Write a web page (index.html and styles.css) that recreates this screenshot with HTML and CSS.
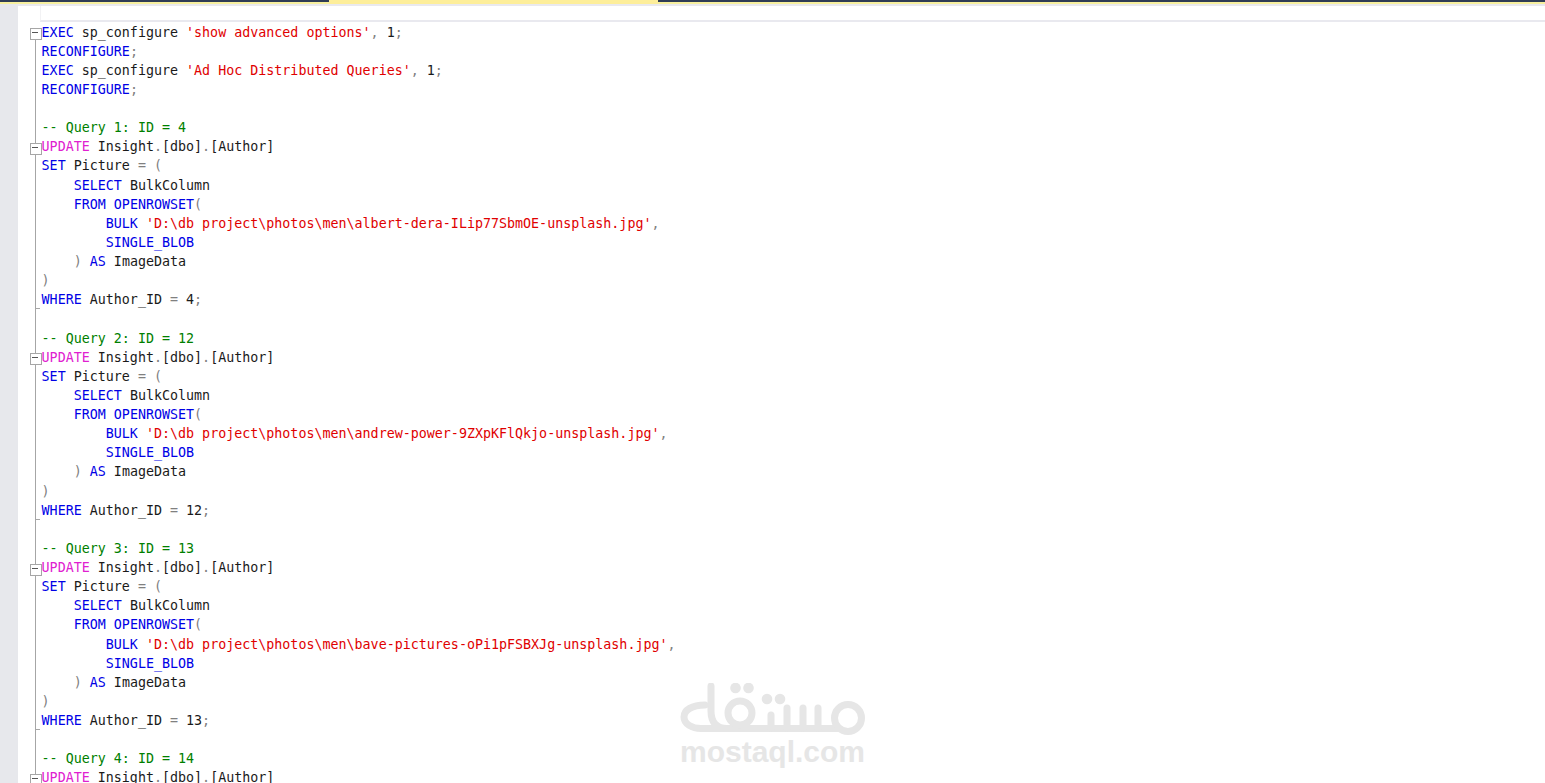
FILE: index.html
```html
<!DOCTYPE html>
<html lang="en">
<head>
<meta charset="utf-8">
<title>SQL editor</title>
<link rel="stylesheet" href="styles.css">
</head>
<body>
<div class="topbar">
  <div class="seg-dark"></div>
  <div class="tab-active"></div>
  <div class="tab-rest"></div>
</div>
<div class="workspace">
  <div class="margin"></div>
  <div class="editor">
    <div class="ruler"></div>
    <div class="code">
<div class="row"><span class="fold minus first"></span><code><b>EXEC</b> sp_configure <i>'show advanced options'</i><s>,</s> 1<s>;</s></code></div>
<div class="row"><span class="fold"></span><code><b>RECONFIGURE</b><s>;</s></code></div>
<div class="row"><span class="fold"></span><code><b>EXEC</b> sp_configure <i>'Ad Hoc Distributed Queries'</i><s>,</s> 1<s>;</s></code></div>
<div class="row"><span class="fold"></span><code><b>RECONFIGURE</b><s>;</s></code></div>
<div class="row"><span class="fold"></span><code> </code></div>
<div class="row"><span class="fold"></span><code><u>-- Query 1: ID = 4</u></code></div>
<div class="row"><span class="fold minus"></span><code><em>UPDATE</em> Insight<s>.</s>[dbo]<s>.</s>[Author]</code></div>
<div class="row"><span class="fold"></span><code><b>SET</b> Picture <s>=</s> <s>(</s></code></div>
<div class="row"><span class="fold"></span><code>    <b>SELECT</b> BulkColumn</code></div>
<div class="row"><span class="fold"></span><code>    <b>FROM</b> <b>OPENROWSET</b><s>(</s></code></div>
<div class="row"><span class="fold"></span><code>        <b>BULK</b> <i>'D:\db project\photos\men\albert-dera-ILip77SbmOE-unsplash.jpg'</i><s>,</s></code></div>
<div class="row"><span class="fold"></span><code>        <b>SINGLE_BLOB</b></code></div>
<div class="row"><span class="fold"></span><code>    <s>)</s> <b>AS</b> ImageData</code></div>
<div class="row"><span class="fold"></span><code><s>)</s></code></div>
<div class="row"><span class="fold end"></span><code><b>WHERE</b> Author_ID <s>=</s> 4<s>;</s></code></div>
<div class="row"><span class="fold"></span><code> </code></div>
<div class="row"><span class="fold"></span><code><u>-- Query 2: ID = 12</u></code></div>
<div class="row"><span class="fold minus"></span><code><em>UPDATE</em> Insight<s>.</s>[dbo]<s>.</s>[Author]</code></div>
<div class="row"><span class="fold"></span><code><b>SET</b> Picture <s>=</s> <s>(</s></code></div>
<div class="row"><span class="fold"></span><code>    <b>SELECT</b> BulkColumn</code></div>
<div class="row"><span class="fold"></span><code>    <b>FROM</b> <b>OPENROWSET</b><s>(</s></code></div>
<div class="row"><span class="fold"></span><code>        <b>BULK</b> <i>'D:\db project\photos\men\andrew-power-9ZXpKFlQkjo-unsplash.jpg'</i><s>,</s></code></div>
<div class="row"><span class="fold"></span><code>        <b>SINGLE_BLOB</b></code></div>
<div class="row"><span class="fold"></span><code>    <s>)</s> <b>AS</b> ImageData</code></div>
<div class="row"><span class="fold"></span><code><s>)</s></code></div>
<div class="row"><span class="fold end"></span><code><b>WHERE</b> Author_ID <s>=</s> 12<s>;</s></code></div>
<div class="row"><span class="fold"></span><code> </code></div>
<div class="row"><span class="fold"></span><code><u>-- Query 3: ID = 13</u></code></div>
<div class="row"><span class="fold minus"></span><code><em>UPDATE</em> Insight<s>.</s>[dbo]<s>.</s>[Author]</code></div>
<div class="row"><span class="fold"></span><code><b>SET</b> Picture <s>=</s> <s>(</s></code></div>
<div class="row"><span class="fold"></span><code>    <b>SELECT</b> BulkColumn</code></div>
<div class="row"><span class="fold"></span><code>    <b>FROM</b> <b>OPENROWSET</b><s>(</s></code></div>
<div class="row"><span class="fold"></span><code>        <b>BULK</b> <i>'D:\db project\photos\men\bave-pictures-oPi1pFSBXJg-unsplash.jpg'</i><s>,</s></code></div>
<div class="row"><span class="fold"></span><code>        <b>SINGLE_BLOB</b></code></div>
<div class="row"><span class="fold"></span><code>    <s>)</s> <b>AS</b> ImageData</code></div>
<div class="row"><span class="fold"></span><code><s>)</s></code></div>
<div class="row"><span class="fold end"></span><code><b>WHERE</b> Author_ID <s>=</s> 13<s>;</s></code></div>
<div class="row"><span class="fold"></span><code> </code></div>
<div class="row"><span class="fold"></span><code><u>-- Query 4: ID = 14</u></code></div>
<div class="row"><span class="fold minus"></span><code><em>UPDATE</em> Insight<s>.</s>[dbo]<s>.</s>[Author]</code></div>
    </div>
  </div>
</div>
<div class="watermark">
  <svg class="wm-logo" viewBox="0 0 186 56" width="186" height="56" aria-hidden="true">
    <g fill="none" stroke="#e6e6e6" stroke-width="7" stroke-linecap="round" stroke-linejoin="round">
      <path d="M32 3V28C32 40 38 45.5 48 45.5"/>
      <path d="M26 22C13 22 5 27 5 34C5 41 13 45.5 22 45.5H160"/>
      <circle cx="61" cy="30" r="12"/>
      <path d="M92 32V45M108 25V45M124 25V45M139 25V45"/>
      <circle cx="169" cy="35" r="13.5"/>
    </g>
    <g fill="#e6e6e6">
      <circle cx="56.5" cy="5" r="5.3"/><circle cx="69.5" cy="5" r="5.3"/>
      <circle cx="88" cy="16" r="5.3"/><circle cx="101" cy="16" r="5.3"/>
    </g>
  </svg>
  <div class="wm-text">mostaql.com</div>
</div>
</body>
</html>
```
FILE: styles.css
```css
* { box-sizing: border-box; }
html, body { margin: 0; height: 100%; }
body { position: relative; width: 1545px; height: 783px; overflow: hidden; background: #fff; }
.topbar { display: flex; height: 4px; }
.seg-dark { width: 329px; background: linear-gradient(#2f3c55 0 2px, #f7f09e 2px); }
.tab-active { width: 329px; background: #fdee9a; }
.tab-rest { flex: 1; background: linear-gradient(#2f3c55 0 2px, #f7f09e 2px); }
.workspace { display: flex; height: 779px; }
.margin { width: 18px; background: #e7e8ec; }
.editor { flex: 1; min-width: 0; border-top: 2px solid #e9e9ee; }
.ruler { height: 16px; margin-left: 22px; border-bottom: 2px solid #e9e9ef; border-left: 1px solid #f2f2f4; }
.code { padding-top: 0.55px; padding-left: 11px; }
.row { display: flex; height: 19.125px; }
.fold { position: relative; flex: none; width: 12.6px; }
.fold::before { content: ""; position: absolute; left: 6px; top: 0; bottom: -1px; width: 1px; background: #a6a6a6; }
.fold.minus { background: linear-gradient(#a6a6a6, #a6a6a6) 6px 0 / 1px 100% no-repeat; }
.fold.minus.first { background-position: 6px 15px; }
.fold.minus::before { top: 5.5px; height: 10px; bottom: auto; left: 1px; width: 10px; background: #fff; border: 1px solid #a6a6a6; }
.fold.minus::after { content: ""; position: absolute; left: 3px; top: 9.5px; width: 6px; height: 1px; background: #555; }
.fold.end::after { content: ""; position: absolute; left: 6px; bottom: 0; width: 5px; height: 1px; background: #a6a6a6; }
.row code { display: block; white-space: pre; font: 13.33px/19.125px "DejaVu Sans Mono", monospace; color: #1a1a1a; }
code b { font-weight: normal; color: #0000e6; }
code i { font-style: normal; color: #e00000; }
code s { text-decoration: none; color: #808080; }
code u { text-decoration: none; color: #008000; }
code em { font-style: normal; color: #e020d0; }
.watermark { position: absolute; left: 679px; top: 683px; width: 187px; text-align: center; }
.wm-logo { display: block; }
.wm-text { font: bold 30px/30px "Liberation Sans", sans-serif; color: #e6e6e6; margin-top: -2px; white-space: nowrap; }
```
